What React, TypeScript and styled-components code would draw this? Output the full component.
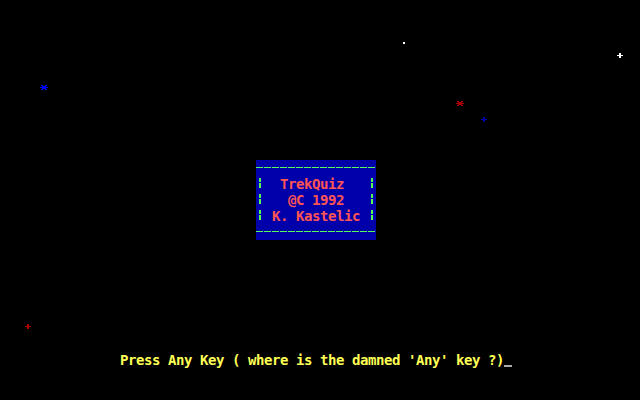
import React from 'react';
import styled, { createGlobalStyle } from 'styled-components';

const Global = createGlobalStyle`
  html, body {
    margin: 0;
    padding: 0;
    background: #000;
  }
  body {
    width: 640px;
    height: 400px;
    overflow: hidden;
  }
`;

const Screen = styled.div`
  position: relative;
  width: 640px;
  height: 400px;
  background: #000;
  display: grid;
  grid-template-columns: repeat(80, 8px);
  grid-template-rows: repeat(25, 16px);
  font-family: "DejaVu Sans Mono", "Liberation Mono", monospace;
  font-weight: bold;
  font-size: 14px;
  line-height: 16px;
  letter-spacing: calc(8px - 0.602em);
  white-space: pre;
`;

const TitleBox = styled.div`
  grid-column: 33 / span 15;
  grid-row: 11 / span 5;
  background: #0000aa;
  display: grid;
  grid-template-columns: 8px 1fr 8px;
  grid-template-rows: repeat(5, 16px);
`;

const DashRule = styled.div`
  grid-column: 1 / -1;
  background: repeating-linear-gradient(
      to right,
      #55ff55 0 7px,
      transparent 7px 8px
    )
    0 7px / 100% 1px no-repeat;
`;

const SideBar = styled.div`
  background:
    linear-gradient(#55ff55, #55ff55) 3px 2px / 2px 4px no-repeat,
    linear-gradient(#55ff55, #55ff55) 3px 7px / 2px 5px no-repeat;
`;

const TitleLine = styled.div<{ $indent: number }>`
  color: #ff5555;
  padding-left: ${(p) => p.$indent * 8}px;
  overflow: hidden;
`;

const Prompt = styled.div`
  grid-column: 16 / span 49;
  grid-row: 23;
  display: flex;
  color: #ffff55;
`;

const PromptText = styled.span`
  flex: none;
  width: 384px;
  overflow: hidden;
`;

const Cursor = styled.span`
  flex: none;
  width: 8px;
  height: 16px;
  background: linear-gradient(#aaaaaa, #aaaaaa) 0 13px / 8px 2px no-repeat;
`;

const StarSprite = styled.svg<{ $x: number; $y: number }>`
  position: absolute;
  left: ${(p) => p.$x}px;
  top: ${(p) => p.$y}px;
  display: block;
  shape-rendering: crispEdges;
`;

const GLYPHS: Record<string, string[]> = {
  asterisk: ['.##..##.', '..####..', '########', '..####..', '.##..##.'],
  plus: ['...##...', '...##...', '.######.', '...##...', '...##...'],
  dot: ['##', '##'],
};

type StarProps = { x: number; y: number; kind: keyof typeof GLYPHS; color: string };

const Star = ({ x, y, kind, color }: StarProps) => {
  const rows = GLYPHS[kind];
  const w = rows[0].length;
  const h = rows.length;
  return (
    <StarSprite $x={x} $y={y} width={w} height={h} viewBox={`0 0 ${w} ${h}`}>
      {rows.flatMap((row, r) =>
        row.split('').map((c, i) =>
          c === '#' ? <rect key={`${r}-${i}`} x={i} y={r} width={1} height={1} fill={color} /> : null
        )
      )}
    </StarSprite>
  );
};

const STARS: StarProps[] = [
  { x: 403, y: 42, kind: 'dot', color: '#ffffff' },
  { x: 616, y: 53, kind: 'plus', color: '#ffffff' },
  { x: 456, y: 101, kind: 'asterisk', color: '#aa0000' },
  { x: 480, y: 117, kind: 'plus', color: '#0000aa' },
  { x: 40, y: 85, kind: 'asterisk', color: '#0000ff' },
  { x: 24, y: 324, kind: 'plus', color: '#aa0000' },
];

const LINES: { text: string; indent: number }[] = [
  { text: 'TrekQuiz', indent: 2 },
  { text: '@C 1992', indent: 3 },
  { text: 'K. Kastelic', indent: 1 },
];

export default function App() {
  return (
    <>
      <Global />
      <Screen>
        {STARS.map((s, i) => (
          <Star key={i} {...s} />
        ))}
        <TitleBox>
          <DashRule />
          {LINES.map((l) => (
            <React.Fragment key={l.text}>
              <SideBar />
              <TitleLine $indent={l.indent}>{l.text}</TitleLine>
              <SideBar />
            </React.Fragment>
          ))}
          <DashRule />
        </TitleBox>
        <Prompt>
          <PromptText>Press Any Key ( where is the damned 'Any' key ?)</PromptText>
          <Cursor />
        </Prompt>
      </Screen>
    </>
  );
}
